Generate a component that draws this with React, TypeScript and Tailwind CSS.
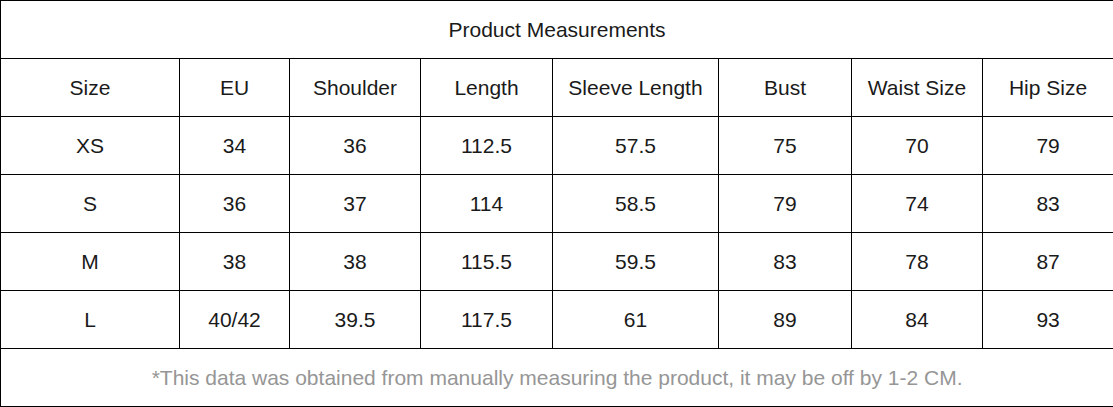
import React from 'react';

const columns = ['Size', 'EU', 'Shoulder', 'Length', 'Sleeve Length', 'Bust', 'Waist Size', 'Hip Size'];
const widths = ['w-[179px]', 'w-[110px]', 'w-[131px]', 'w-[132px]', 'w-[166px]', 'w-[133px]', 'w-[131px]', 'w-[131px]'];

const rows = [
  ['XS', '34', '36', '112.5', '57.5', '75', '70', '79'],
  ['S', '36', '37', '114', '58.5', '79', '74', '83'],
  ['M', '38', '38', '115.5', '59.5', '83', '78', '87'],
  ['L', '40/42', '39.5', '117.5', '61', '89', '84', '93'],
];

const cell = 'border border-black h-[58px] p-0 text-center align-middle font-normal';

export default function App() {
  return (
    <div className="bg-white w-[1113px] h-[407px] font-['Liberation_Sans',Arial,sans-serif] text-[21px] text-[#1a1a1a]">
      <table className="table-fixed border-collapse w-[1113px]">
        <colgroup>
          {widths.map((w, i) => (
            <col key={i} className={w} />
          ))}
        </colgroup>
        <tbody>
          <tr>
            <td colSpan={8} className={cell}>Product Measurements</td>
          </tr>
          <tr>
            {columns.map((c) => (
              <td key={c} className={cell}>{c}</td>
            ))}
          </tr>
          {rows.map((r) => (
            <tr key={r[0]}>
              {r.map((v, i) => (
                <td key={i} className={cell}>{v}</td>
              ))}
            </tr>
          ))}
          <tr>
            <td colSpan={8} className={`${cell} text-[#969696]`}>
              *This data was obtained from manually measuring the product, it may be off by 1-2 CM.
            </td>
          </tr>
        </tbody>
      </table>
    </div>
  );
}
